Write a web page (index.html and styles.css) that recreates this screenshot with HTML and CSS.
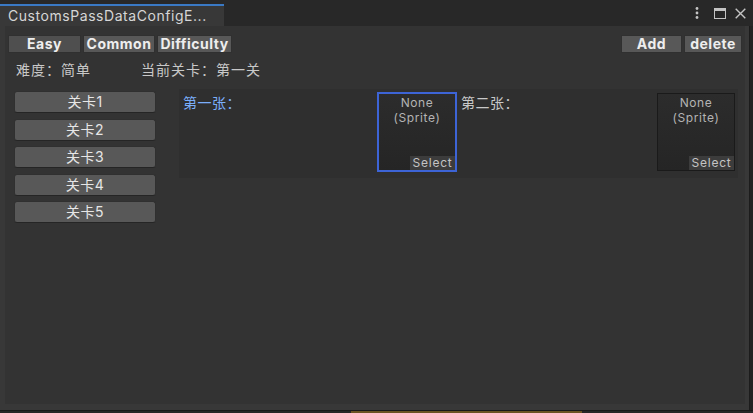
FILE: index.html
```html
<!DOCTYPE html>
<html lang="zh">
<head>
<meta charset="utf-8">
<title>CustomsPassDataConfigEditor</title>
<link rel="stylesheet" href="styles.css">
</head>
<body>
<div class="window">
  <div class="tabbar">
    <div class="tab">CustomsPassDataConfigE...</div>
    <div class="tab-actions">
      <svg class="ico" width="4" height="12" viewBox="0 0 4 12"><circle cx="2" cy="1.5" r="1.4" fill="#c4c4c4"/><circle cx="2" cy="6" r="1.4" fill="#c4c4c4"/><circle cx="2" cy="10.5" r="1.4" fill="#c4c4c4"/></svg>
      <svg class="ico" width="12" height="11" viewBox="0 0 12 11"><rect x="0.5" y="0.5" width="11" height="10" fill="none" stroke="#c4c4c4"/><rect x="0" y="0" width="12" height="3" fill="#c4c4c4"/></svg>
      <svg class="ico" width="11" height="11" viewBox="0 0 11 11"><path d="M0.7 0.7 L10.3 10.3 M10.3 0.7 L0.7 10.3" stroke="#c4c4c4" stroke-width="1.4"/></svg>
    </div>
  </div>
  <div class="panel">
    <div class="inner">
      <div class="toolbar">
        <div class="group">
          <div class="tbtn tbtn-easy">Easy</div>
          <div class="tbtn tbtn-common">Common</div>
          <div class="tbtn tbtn-diff">Difficulty</div>
        </div>
        <div class="group">
          <div class="tbtn tbtn-add">Add</div>
          <div class="tbtn tbtn-del">delete</div>
        </div>
      </div>
      <div class="info">
        <span class="info-diff">难度：简单</span>
        <span class="info-level">当前关卡：第一关</span>
      </div>
      <div class="body">
        <div class="levels">
          <div class="lvl">关卡1</div>
          <div class="lvl">关卡2</div>
          <div class="lvl">关卡3</div>
          <div class="lvl">关卡4</div>
          <div class="lvl">关卡5</div>
        </div>
        <div class="slots">
          <div class="slot slot-first">
            <div class="slot-label active">第一张：</div>
            <div class="sprite focused">
              <div class="sprite-none">None<br>(Sprite)</div>
              <div class="sprite-select">Select</div>
            </div>
          </div>
          <div class="slot slot-second">
            <div class="slot-label">第二张：</div>
            <div class="sprite">
              <div class="sprite-none">None<br>(Sprite)</div>
              <div class="sprite-select">Select</div>
            </div>
          </div>
        </div>
      </div>
    </div>
  </div>
  <div class="statusbar"><div class="gold"></div></div>
</div>
</body>
</html>
```
FILE: styles.css
```css
* { box-sizing: border-box; margin: 0; padding: 0; }
html, body {
  width: 753px;
  height: 413px;
  overflow: hidden;
  background: #232323;
  font-family: Inter, "Noto Sans CJK SC", sans-serif;
  color: #c4c4c4;
}
.window { display: flex; flex-direction: column; height: 413px; }

.tabbar {
  height: 26px;
  display: flex;
  background: #282828;
  flex: none;
}
.tab {
  width: 224px;
  height: 22px;
  margin-top: 4px;
  border-top: 2px solid #3a79c4;
  background: #383838;
  color: #d6d6d6;
  font-size: 14px;
  letter-spacing: 0.55px;
  line-height: 19px;
  padding-left: 8px;
  white-space: nowrap;
}
.tab-actions {
  margin-left: auto;
  display: flex;
  align-items: center;
  padding-right: 7px;
}
.ico { display: block; }
.tab-actions .ico:nth-child(1) { margin-right: 15px; }
.tab-actions .ico:nth-child(2) { margin-right: 9px; }

.panel {
  flex: 1;
  display: flex;
  width: 750px;
  background: #383838;
  border-right: 1px solid #1c1c1c;
}
.inner {
  flex: 1;
  margin: 0 4px 6px 5px;
  background: #333333;
  padding: 9px 3px 0 3px;
  display: flex;
  flex-direction: column;
}

.toolbar { display: flex; justify-content: space-between; height: 18px; }
.group { display: flex; gap: 2px; }
.tbtn {
  height: 18px;
  background: #585858;
  border: 1px solid #303030;
  color: #eeeeee;
  font-weight: 700;
  font-size: 14px;
  letter-spacing: 0.5px;
  line-height: 16px;
  text-align: center;
  white-space: nowrap;
}
.tbtn-easy { width: 73px; background: #4f4f4f; }
.tbtn-common { width: 72px; }
.tbtn-diff { width: 75px; }
.tbtn-add { width: 61px; }
.tbtn-del { width: 58px; }

.info {
  margin-top: 2px;
  height: 28px;
  display: flex;
  align-items: center;
  padding-left: 8px;
  font-size: 14px;
  letter-spacing: 1px;
  color: #c8c8c8;
}
.info-diff { width: 125px; }

.body { display: flex; margin-top: 6px; padding-left: 6px; }
.levels {
  width: 142px;
  margin-top: 2px;
  margin-right: 23px;
  display: flex;
  flex-direction: column;
  gap: 5.5px;
}
.lvl {
  height: 22px;
  background: #585858;
  border: 1px solid #303030;
  border-bottom-color: #252525;
  border-radius: 3px;
  color: #e6e6e6;
  font-size: 14px;
  letter-spacing: 0.5px;
  line-height: 20px;
  text-align: center;
}

.slots {
  width: 559px;
  height: 89px;
  background: #2f2f2f;
  display: flex;
}
.slot {
  display: flex;
  padding: 4px 0 0 4px;
}
.slot-first { width: 278px; padding-right: 1px; }
.slot-second { flex: 1; padding-right: 3px; }
.slot-label {
  flex: 1;
  font-size: 14px;
  letter-spacing: 0.5px;
  line-height: 20px;
  color: #c8c8c8;
}
.slot-label.active { color: #7aaefa; }

.sprite {
  width: 78px;
  height: 78px;
  border: 1px solid #1a1a1a;
  background: linear-gradient(#2c2c2c, #252525);
  display: flex;
  flex-direction: column;
  align-items: center;
}
.sprite.focused {
  border-color: #3d64d6;
  box-shadow: 0 0 0 1px #3d64d6;
}
.sprite-none {
  padding-top: 1px;
  font-size: 12px;
  letter-spacing: 0.6px;
  line-height: 15px;
  text-align: center;
  color: #b4b4b4;
}
.sprite-select {
  margin-top: auto;
  align-self: flex-end;
  width: 45px;
  height: 14px;
  background: #3c3c3c;
  font-size: 12px;
  letter-spacing: 0.8px;
  line-height: 14px;
  text-align: center;
  color: #c4c4c4;
}

.statusbar {
  height: 3px;
  flex: none;
  border-top: 1px solid #191919;
  background: #262626;
}
.gold {
  margin-left: 351px;
  width: 231px;
  height: 2px;
  background: #6a5322;
}
```
